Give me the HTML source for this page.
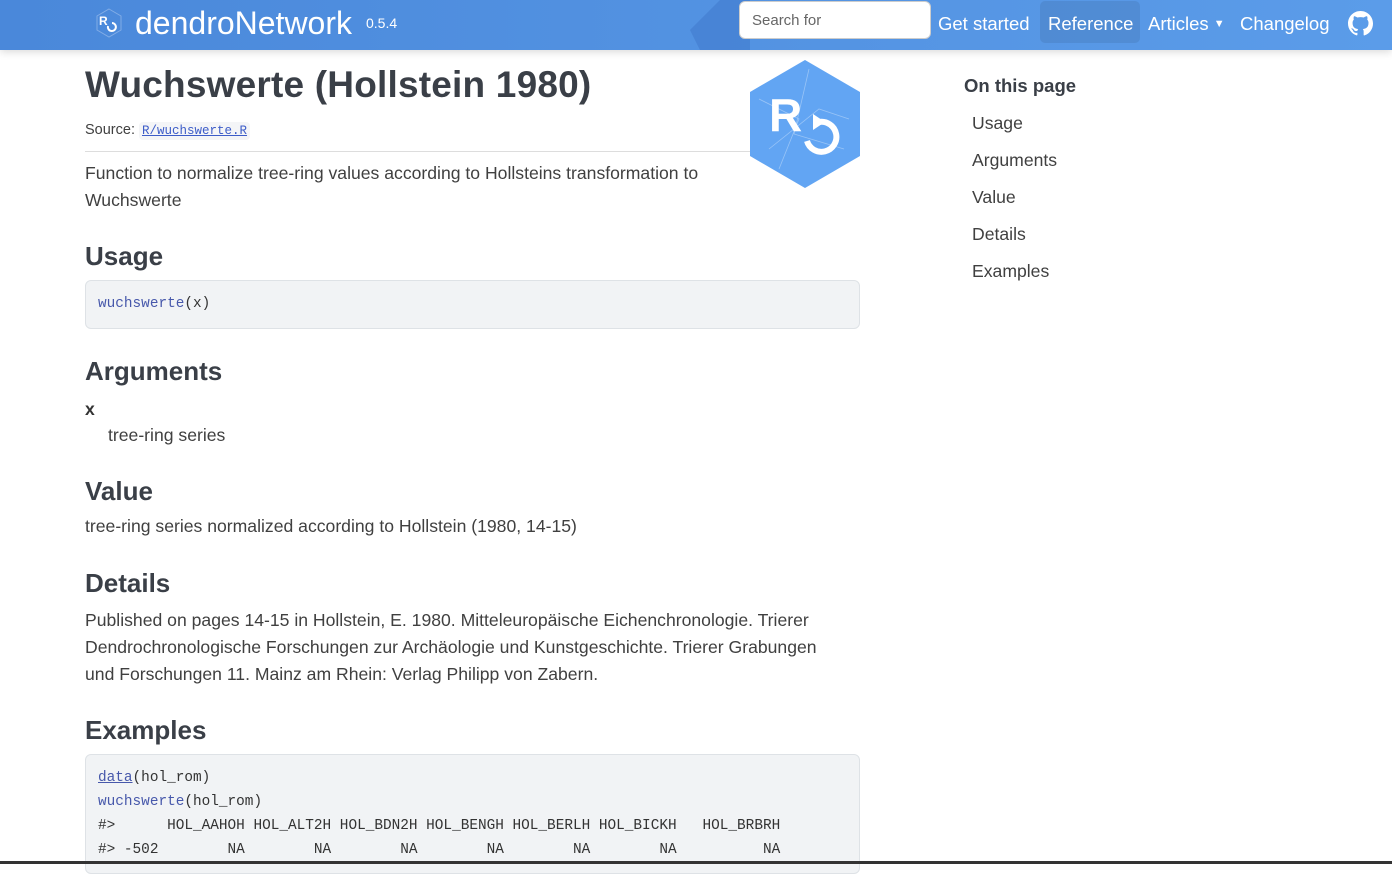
<!DOCTYPE html>
<html><head><meta charset="utf-8"><style>
*{box-sizing:border-box}
body{margin:0;width:1392px;height:864px;overflow:hidden;background:#fff;font-family:"Liberation Sans",sans-serif;color:#404040;position:relative}
.nav{position:absolute;left:0;top:0;width:1392px;height:50px;background:linear-gradient(90deg,#4a88da,#5b9ce9);box-shadow:0 2px 8px rgba(0,0,0,.15)}
.nav .t{position:absolute;color:#fff}
.search{position:absolute;left:739px;top:1px;width:192px;height:38px;background:#fff;border-radius:6px;border:1px solid #ccc;font-size:15px;color:#666;padding:10px 12px}
.ref{position:absolute;left:1040px;top:1px;width:100px;height:42px;background:rgba(0,0,0,.08);border-radius:5px}
h1{position:absolute;left:85px;top:64px;margin:0;font-size:37px;font-weight:bold;color:#3a3f47;letter-spacing:.2px}
h2{position:absolute;left:85px;margin:0;font-size:26px;font-weight:bold;color:#3a3f47}
.p{position:absolute;left:85px;font-size:17.6px;line-height:27px;color:#404040}
code,.mono{font-family:"Liberation Mono",monospace}
.pre{position:absolute;left:85px;width:775px;background:#f1f3f5;border:1px solid #dee2e6;border-radius:6px;font-family:"Liberation Mono",monospace;font-size:14.4px;color:#333;padding:0 12px;white-space:pre;line-height:24px}
.fn{color:#4758ab}
.toc{position:absolute;left:972px;font-size:17.6px;color:#404040}
</style></head><body>
<div class="nav">
<svg style="position:absolute;left:96px;top:8px" width="26" height="30" viewBox="0 0 26 30"><polygon points="13,1 25,8 25,22 13,29 1,22 1,8" fill="none" stroke="rgba(255,255,255,.3)" stroke-width="1"/><text x="3" y="17" font-family="Liberation Sans" font-weight="bold" font-size="12" fill="#fff">R</text><path d="M12 18 a4 4 0 1 0 4-3" stroke="#fff" stroke-width="2" fill="none"/></svg>
<div class="t" style="left:135px;top:5px;font-size:32px">dendroNetwork</div>
<div class="t" style="left:366px;top:15px;font-size:14px">0.5.4</div>
<svg style="position:absolute;left:680px;top:0" width="70" height="50"><polygon points="40,0 70,0 70,50 20,50 10,30" fill="rgba(40,90,180,.25)"/></svg>
<div class="search">Search for</div>
<div class="ref"></div>
<div class="t" style="left:938px;top:13px;font-size:18.5px">Get started</div>
<div class="t" style="left:1048px;top:13px;font-size:18.5px">Reference</div>
<div class="t" style="left:1148px;top:13px;font-size:18.5px">Articles <span style="font-size:11px;vertical-align:3px">▼</span></div>
<div class="t" style="left:1240px;top:13px;font-size:18.5px">Changelog</div>
<svg style="position:absolute;left:1348px;top:11px" width="25" height="25" viewBox="0 0 16 16"><path fill="#fff" d="M8 0C3.58 0 0 3.580 0 8c0 3.54 2.29 6.53 5.470 7.59.4.07.55-.17.55-.38v-1.33c-2.23.48-2.7-1.07-2.7-1.07-.36-.92-.89-1.17-.89-1.17-.73-.5.06-.49.06-.49.8.06 1.23.83 1.23.83.71 1.22 1.87.87 2.33.66.07-.52.28-.87.51-1.07-1.78-.2-3.64-.89-3.64-3.95 0-.87.31-1.59.82-2.150-.08-.2-.36-1.02.08-2.12 0 0 .67-.21 2.2.82a7.6 7.6 0 0 1 4 0c1.53-1.04 2.2-.82 2.2-.82.44 1.1.16 1.92.08 2.12.51.56.82 1.27.82 2.15 0 3.07-1.87 3.75-3.65 3.95.29.25.54.73.54 1.48v2.2c0 .21.15.46.55.38A8 8 0 0 0 16 8c0-4.42-3.58-8-8-8z"/></svg>
</div>

<h1>Wuchswerte (Hollstein 1980)</h1>
<div class="p" style="top:120px;font-size:14.5px;line-height:20px">Source: <code style="font-size:12.5px;background:#f4f5f7;padding:2px 3px;border-radius:4px;color:#3c5cc8;text-decoration:underline">R/wuchswerte.R</code></div>
<div style="position:absolute;left:85px;top:151px;width:680px;border-top:1px solid #ddd"></div>
<svg style="position:absolute;left:749px;top:59px" width="112" height="130" viewBox="0 0 112 130"><polygon points="56,1 111,33 111,97 56,129 1,97 1,33" fill="#62a5f3"/><path d="M10 40 L50 60 L30 110 M60 10 L45 75 L95 90 M20 90 L70 50 L100 60" stroke="rgba(255,255,255,.35)" fill="none" stroke-width=".8"/><text x="20" y="72" font-family="Liberation Sans" font-weight="bold" font-size="46" fill="#fff">R</text><path d="M58 82 a15 15 0 1 0 12-19" stroke="#fff" stroke-width="6" fill="none"/><polygon points="64,55 76,63 64,71" fill="#fff"/></svg>
<div class="p" style="top:160px">Function to normalize tree-ring values according to Hollsteins transformation to<br>Wuchswerte</div>

<h2 style="top:241px">Usage</h2>
<div class="pre" style="top:280px;height:49px;padding-top:11px"><span class="fn">wuchswerte</span>(x)</div>

<h2 style="top:356px">Arguments</h2>
<div class="p" style="top:396px;font-weight:bold;color:#333">x</div>
<div class="p" style="top:422px;left:108px">tree-ring series</div>

<h2 style="top:476px">Value</h2>
<div class="p" style="top:513px">tree-ring series normalized according to Hollstein (1980, 14-15)</div>

<h2 style="top:568px">Details</h2>
<div class="p" style="top:607px">Published on pages 14-15 in Hollstein, E. 1980. Mitteleuropäische Eichenchronologie. Trierer<br>Dendrochronologische Forschungen zur Archäologie und Kunstgeschichte. Trierer Grabungen<br>und Forschungen 11. Mainz am Rhein: Verlag Philipp von Zabern.</div>

<h2 style="top:715px">Examples</h2>
<div class="pre" style="top:754px;height:120px;padding-top:11px"><span class="fn" style="text-decoration:underline">data</span>(hol_rom)
<span class="fn">wuchswerte</span>(hol_rom)
#&gt;      HOL_AAHOH HOL_ALT2H HOL_BDN2H HOL_BENGH HOL_BERLH HOL_BICKH   HOL_BRBRH
#&gt; -502        NA        NA        NA        NA        NA        NA          NA</div>
<div style="position:absolute;left:0;top:861px;width:1392px;height:3px;background:#333"></div>

<div style="position:absolute;left:964px;top:75px;font-size:18.5px;font-weight:bold;color:#3a3f47">On this page</div>
<div class="toc" style="top:113px">Usage</div>
<div class="toc" style="top:150px">Arguments</div>
<div class="toc" style="top:187px">Value</div>
<div class="toc" style="top:224px">Details</div>
<div class="toc" style="top:261px">Examples</div>
</body></html>
